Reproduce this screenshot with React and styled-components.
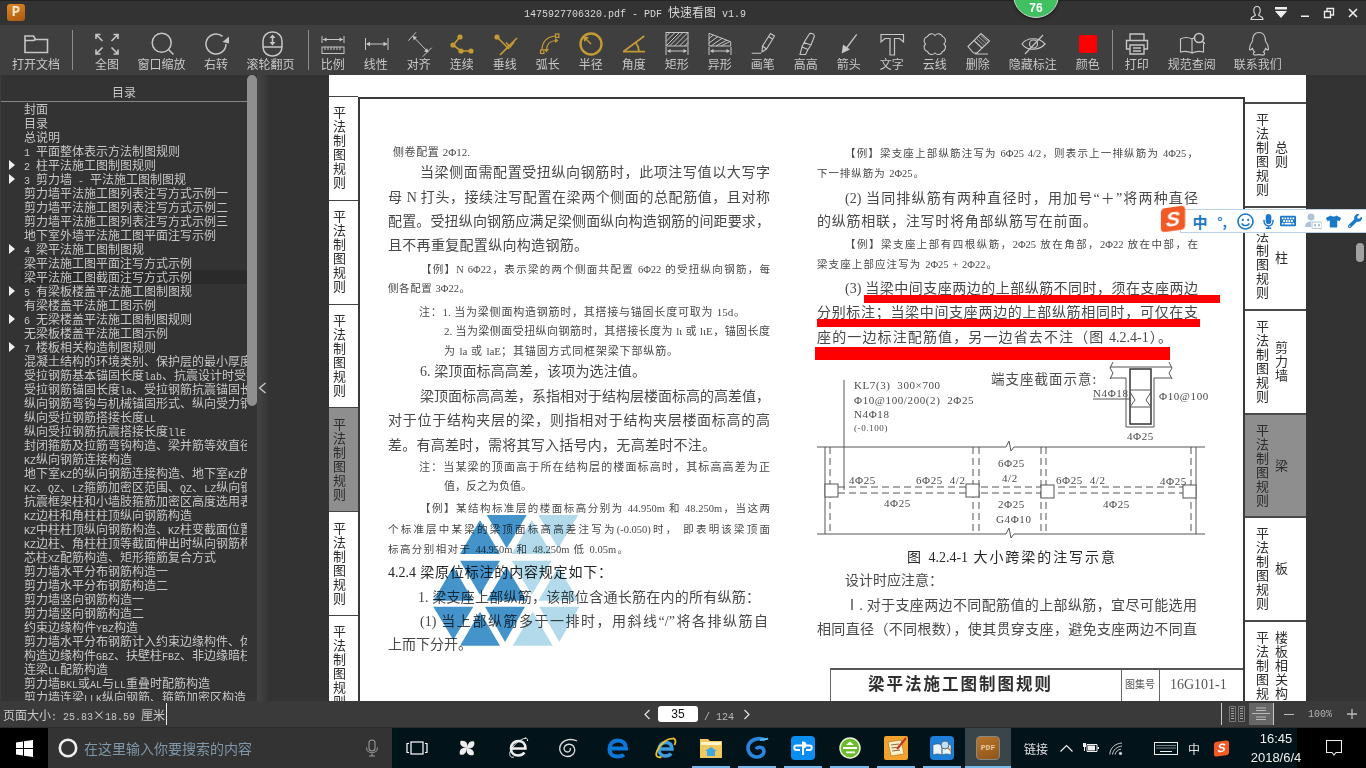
import React from "react";
import styled, { createGlobalStyle } from "styled-components";
import { FaWrench, FaTshirt, FaMicrophone, FaKeyboard, FaRegSmile } from "react-icons/fa";

const CJK = `"Noto Sans CJK SC", sans-serif`;
const GOLD = "#c49a35";
const GREY = "#c6c6c6";

const GlobalStyle = createGlobalStyle`
  html, body {
    margin: 0;
    height: 100%;
    overflow: hidden;
    background: #333;
  }
  body {
    font-family: ${CJK};
  }
  * {
    box-sizing: border-box;
  }
`;

const Screen = styled.div`
  width: 1366px;
  height: 768px;
  display: flex;
  flex-direction: column;
  position: relative;
  overflow: hidden;
`;

/* title bar */
const TitleBar = styled.div`
  height: 25px;
  flex: none;
  background: #333;
  border-top: 1px solid #222;
  display: flex;
  align-items: center;
`;

const Logo = styled.div`
  width: 18px;
  height: 17px;
  margin-left: 7px;
  margin-top: -1px;
  border-radius: 3px;
  background: linear-gradient(160deg, #e08a24, #a9570f);
  color: #f4e6d2;
  font: bold 14px/17px "Liberation Mono", monospace;
  text-align: center;
`;

const Title = styled.div`
  margin-left: 499px;
  color: #d8d8d8;
  font-size: 12px;
  line-height: 16px;
  white-space: nowrap;
`;

const Latin = styled.span`
  font-family: "Liberation Mono", monospace;
  font-size: 10px;
`;

const WinControls = styled.div`
  margin-left: auto;
  margin-right: 1px;
  display: flex;
`;

const WinButton = styled.div`
  width: 24px;
  height: 24px;
  display: flex;
  align-items: center;
  justify-content: center;
`;

const ScoreBadge = styled.div`
  position: absolute;
  left: 1013px;
  top: -28px;
  width: 46px;
  height: 46px;
  border-radius: 50%;
  background: #41c062;
  border: 1px solid #cfd8d0;
  box-shadow: 0 1px 3px rgba(0, 0, 0, 0.6);
  color: #fff;
  font: bold 12px/14px "Liberation Sans", sans-serif;
  text-align: center;
  padding-top: 28px;
`;

/* toolbar */
const Toolbar = styled.div`
  height: 50px;
  flex: none;
  background: #3f3f3f;
  padding-top: 5px;
  display: flex;
`;

const ToolGroup = styled.div`
  display: flex;
  padding-left: ${(p) => p.$pl || 0}px;
  padding-right: ${(p) => p.$pr || 0}px;
`;

const ToolSep = styled.div`
  width: 1px;
  height: 40px;
  background: #8c8c8c;
`;

const Tool = styled.div`
  width: ${(p) => p.$w}px;
  display: flex;
  flex-direction: column;
  align-items: center;
`;

const ToolLabel = styled.div`
  font-size: 12px;
  line-height: 12px;
  color: #c8c8c8;
  white-space: nowrap;
`;

const ToolSvg = styled.svg`
  width: 32px;
  height: 28px;
  flex: none;
  fill: none;
  stroke: ${(p) => (p.$gold ? GOLD : GREY)};
  stroke-width: ${(p) => p.$sw || 1.3}px;
  .solid {
    fill: ${(p) => (p.$gold ? GOLD : GREY)};
    stroke: none;
  }
`;

const ColorSwatch = styled.div`
  width: 18px;
  height: 18px;
  margin: 5px 0;
  border-radius: 2px;
  background: #ff0000;
`;

const I = ({ gold, sw, children }) => (
  <ToolSvg viewBox="0 0 32 28" $gold={gold} $sw={sw}>
    {children}
  </ToolSvg>
);

const Dim = ({ y = 21 }) => (
  <>
    <path d={`M5 ${y - 4}v8M27 ${y - 4}v8M7 ${y}h18`} />
    <path className="solid" d={`M6 ${y}l3.5-2v4zM26 ${y}l-3.5-2v4z`} />
  </>
);

const icons = {
  open: (
    <I sw={1.6}>
      <path d="M5 22.5V6h8.5l2 3.5h12v13z" />
      <path d="M5 10.5h8.5l2-1" />
    </I>
  ),
  full: (
    <I sw={1.6}>
      <path d="M5 9V4.5h4.5M5.5 5l6 6M22.5 4.5H27V9M26.5 5l-6 6M5 19.5V24h4.5M5.5 23.5l6-6M27 19.5V24h-4.5M26.5 23.5l-6-6" />
    </I>
  ),
  zoom: (
    <I sw={1.5}>
      <circle cx="15.7" cy="12.7" r="9.5" />
      <path d="M22.5 19.5l5 5" />
    </I>
  ),
  rotate: (
    <I sw={1.5}>
      <path d="M26 14A10 10 0 1 1 22.5 6.4" />
      <path className="solid" d="M29 6.5v7l-6.5-1.5z" />
    </I>
  ),
  wheel: (
    <I sw={1.5}>
      <rect x="8" y="2" width="19" height="24" rx="9" />
      <path d="M8 17h19" />
      <path d="M17.5 7v6" />
      <path className="solid" d="M17.5 4.5l3 3.5h-6zM17.5 15.5l3-3.5h-6z" />
    </I>
  ),
  ratio: (
    <I sw={1}>
      <path d="M5 6v7M27 6v7M6 9.5h20" />
      <path className="solid" d="M6 9.5l3.5-2v4zM26 9.5l-3.5-2v4z" />
      <rect x="5" y="17" width="22" height="6.5" />
      <path d="M8 17v3M11 17v3M14 17v3M17 17v3M20 17v3M23 17v3" />
    </I>
  ),
  linear: (
    <I sw={1}>
      <path d="M5.5 8v12M28 8v12M7 14h20" />
      <path className="solid" d="M6 14l4-2.2v4.4zM27.5 14l-4-2.2v4.4z" />
    </I>
  ),
  align: (
    <I sw={1}>
      <path d="M5.3 10.7L13 2.3M19.7 26.7l9-9M10.3 6.7l14.4 15" />
      <path className="solid" d="M9.5 6l4.5 1-3.2 3.2zM25.5 22.5l-4.5-1 3.2-3.2z" />
    </I>
  ),
  chain: (
    <I gold sw={1.7}>
      <path d="M14 7L7 15l8 6h10" />
      <circle className="solid" cx="14" cy="7" r="2.6" />
      <circle className="solid" cx="7" cy="15" r="2.6" />
      <circle className="solid" cx="15" cy="21" r="2.6" />
      <circle className="solid" cx="25" cy="21" r="2.6" />
    </I>
  ),
  perp: (
    <I gold sw={1.6}>
      <path d="M8 7l12 12M28 8L11 25M17 12.5l4 4.5 4-5" />
      <circle className="solid" cx="8" cy="7" r="2.6" />
    </I>
  ),
  arc: (
    <I gold sw={1.2}>
      <rect x="8.5" y="20" width="3.4" height="3.4" />
      <rect x="23.5" y="4" width="3.4" height="3.4" />
      <path d="M10 20C10 12 15 6.5 23.5 6M14.5 20C14.5 15 17.5 11 24 10.5" />
      <path className="solid" d="M26.5 10.5l-3.5-2.4v4.8zM14.5 22.5l-2.4-3.5h4.8z" />
    </I>
  ),
  radius: (
    <I gold sw={2.4}>
      <circle cx="16" cy="14" r="10.5" />
      <path strokeWidth="1.4" d="M16 14L10 8" />
      <path className="solid" d="M8.5 6.5l5.5.8-4.7 4.7z" />
    </I>
  ),
  angle: (
    <I gold sw={1.7}>
      <path d="M5 21.7h22M5.5 21.5L26.3 6M18 13Q21 17 21 21.7" />
    </I>
  ),
  rect: (
    <I sw={1}>
      <rect x="5" y="2.5" width="22" height="13.5" />
      <path d="M5 6.5L9 2.5M5 11.5L14 2.5M5 16L18.5 2.5M8.5 16L22 2.5M13.5 16L27 2.5M18.5 16L27 7.5M23.5 16L27 12.5" />
      <Dim />
    </I>
  ),
  shape: (
    <I sw={1}>
      <path d="M5 3.3l21.7 8.4V16H5z" />
      <path d="M5 8.5L9.5 5M5 13L14 6.5M7 16L18.5 8M12 16L23 10M17 16L26 11.5" />
      <Dim />
    </I>
  ),
  pen: (
    <I sw={1.1}>
      <path d="M4.7 23.3H14M15 22L15.5 16L23.5 3.5L27.5 6L19.5 19ZM21.5 6.5l4 2.5M15.5 16l4 3" />
    </I>
  ),
  marker: (
    <I sw={1.1}>
      <path d="M19 4.5C20 2.5 24 3.5 24.5 6L21 15L14 12.5ZM14 12.5L12 17L18 19.5L21 15M12 17L10 24.5H15.5L18 19.5" />
    </I>
  ),
  arrow: (
    <I sw={1.3}>
      <path d="M12 20L23.7 4.3" />
      <path className="solid" d="M8.7 23.5L10 14.5L17 19.5Z" />
    </I>
  ),
  text: (
    <I sw={1.2}>
      <path d="M5 4.5H27.5V12L23.5 8.5H18.5V25H14V8.5H9L5 12Z" />
    </I>
  ),
  cloud: (
    <I sw={1.1}>
      <path d="M8.5 6.5A4.4 4.4 0 0 1 16 5.5A4.4 4.4 0 0 1 23.5 6.5A4.4 4.4 0 0 1 25 14A4.4 4.4 0 0 1 23.5 21.5A4.4 4.4 0 0 1 16 23A4.4 4.4 0 0 1 8.5 21.5A4.4 4.4 0 0 1 6.5 14A4.4 4.4 0 0 1 8.5 6.5Z" />
    </I>
  ),
  eraser: (
    <I sw={1.1}>
      <path d="M6 16.5L19 3.5L27.5 11L15 23H11.5ZM12 10.5L20.5 18.5M13 24H26" />
      <path strokeWidth="0.7" d="M15 9l7 6.5M17 7l7 6.5M19 5.5l6.5 6" />
    </I>
  ),
  eye: (
    <I sw={1.2}>
      <path d="M5 14C10 7 22 7 28 14C22 21 10 21 5 14ZM8 24L26 5" />
      <circle cx="16.5" cy="14" r="4" />
    </I>
  ),
  print: (
    <I sw={1.4}>
      <path d="M9 10V4H23V10M9 19H5.5V10.5H26.5V19H23M9 15H23V24H9ZM12 18h8M12 21h8" />
    </I>
  ),
  book: (
    <I sw={1.1}>
      <path d="M16 9C12 7 8 7 4.5 9V22C8 21 12 21 16 23V9ZM16 9C16.8 8.4 17.6 8 18.5 7.7M16 23C20 21 24 21 27.5 22V13.5" />
      <circle cx="23" cy="8" r="4.5" strokeWidth="1.6" />
      <path strokeWidth="1.6" d="M26.2 11.2l2.6 2.6" />
    </I>
  ),
  qq: (
    <I sw={1.1}>
      <path d="M17 2.5C12 2.5 10.5 7 10.5 11C9 13 7.5 16 7.5 19C7.5 20.5 9 20 10.5 18.5C11 20 11.5 21 12.5 22C10.5 23 11 25.5 14 25C16 25 16.5 24.5 17 24.5C17.5 24.5 18 25 20 25C23 25.5 23.5 23 21.5 22C22.5 21 23 20 23.5 18.5C25 20 26.5 20.5 26.5 19C26.5 16 25 13 23.5 11C23.5 7 22 2.5 17 2.5Z" />
    </I>
  ),
};

/* main area */
const Main = styled.div`
  height: 626px;
  flex: none;
  display: flex;
  background: #333;
  overflow: hidden;
`;

const Sidebar = styled.div`
  width: 247px;
  flex: none;
  overflow: hidden;
  border-left: 1px solid #3c3c3c;
`;

const SidebarHead = styled.div`
  height: 27px;
  padding-top: 8px;
  border-bottom: 1px solid #858585;
  color: #c8c8c8;
  font-size: 12px;
  line-height: 18px;
  text-align: center;
`;

const Row = styled.div`
  height: 14px;
  display: flex;
  color: #c8c8c8;
  font-size: 12px;
  line-height: 14px;
`;

const RowArrow = styled.div`
  width: 20px;
  flex: none;
  padding: 2px 0 0 8px;
  &::before {
    content: "";
    display: ${(p) => (p.$on ? "block" : "none")};
    width: 0;
    height: 0;
    border-top: 5px solid transparent;
    border-bottom: 5px solid transparent;
    border-left: 6px solid #f0f0f0;
  }
`;

const RowText = styled.div`
  flex: 1;
  min-width: 0;
  padding-left: 3px;
  white-space: nowrap;
  overflow: hidden;
  background: ${(p) => (p.$sel ? "#2a2a2a" : "transparent")};
`;

const ScrollTrack = styled.div`
  width: 10px;
  flex: none;
`;

const ScrollThumb = styled.div`
  height: 331px;
  border-radius: 5px;
  background: #8f8f8f;
`;

const Handle = styled.div`
  width: 11px;
  flex: none;
  background: linear-gradient(90deg, #444, #363636);
  display: flex;
  align-items: center;
  justify-content: center;
  height: 100%;
`;

const LeftGutter = styled.div`
  width: 61px;
  flex: none;
`;

const RightGutter = styled.div`
  width: 60px;
  flex: none;
  padding: 168px 2px 0 50px;
`;

const PageThumb = styled.div`
  width: 8px;
  height: 19px;
  border-radius: 4px;
  background: #a2a2a2;
`;

/* scanned page */
const Page = styled.div`
  width: 977px;
  flex: none;
  height: 100%;
  background: #fff;
  position: relative;
  display: flex;
  overflow: hidden;
  color: #484848;
  font-family: "Liberation Serif", ${CJK};
`;

const LeftTabs = styled.div`
  width: 29px;
  flex: none;
  padding-top: 21px;
`;

const LeftTab = styled.div`
  height: 103.8px;
  border-top: 1px solid #444;
  background: ${(p) => (p.$on ? "#8e8e8e" : "#fff")};
  padding-left: 3px;
  display: flex;
  align-items: center;
`;

const TabText = styled.div`
  writing-mode: vertical-rl;
  text-orientation: upright;
  font-family: ${CJK};
  font-size: 13px;
  line-height: 14px;
  letter-spacing: 1px;
  color: #2c2c2c;
  filter: blur(0.3px);
`;

const RightTabs = styled.div`
  width: 61px;
  flex: none;
  padding-top: 27px;
`;

const RightTab = styled.div`
  height: 103.6px;
  border-top: 2px solid #4a4a4a;
  background: ${(p) => (p.$on ? "#8e8e8e" : "#fff")};
  padding-left: 10px;
  display: flex;
  align-items: center;
  gap: 5px;
`;

const Frame = styled.div`
  width: 887px;
  flex: none;
  margin-top: 22px;
  border-top: 2px solid #3a3a3a;
  border-left: 2px solid #3a3a3a;
  border-right: 2px solid #3a3a3a;
  display: flex;
  flex-direction: column;
`;

const FrameBody = styled.div`
  height: 569px;
  flex: none;
  display: flex;
  filter: blur(0.3px);
`;

const Column = styled.div`
  width: ${(p) => p.$w}px;
  flex: none;
  margin-left: ${(p) => p.$ml}px;
  padding-top: ${(p) => p.$pt}px;
`;

const Line = styled.div`
  margin-left: ${(p) => p.$x}px;
  width: ${(p) => p.$w}px;
  height: ${(p) => p.$h}px;
  font-size: ${(p) => p.$s}px;
  line-height: 20px;
  color: ${(p) => (p.$dark ? "#262626" : "inherit")};
  white-space: nowrap;
  text-align: justify;
  text-align-last: justify;
`;

const TitleBlock = styled.div`
  margin-left: 470px;
  height: 40px;
  flex: none;
  border-top: 2px solid #555;
  border-left: 1px solid #666;
  display: flex;
  filter: blur(0.3px);
`;

const BlockCell = styled.div`
  width: ${(p) => p.$w}px;
  flex: none;
  padding-left: ${(p) => p.$pl}px;
  border-left: ${(p) => (p.$line ? "1px solid #666" : "none")};
  height: 32px;
  font-size: ${(p) => p.$s}px;
  font-weight: ${(p) => (p.$b ? 700 : 400)};
  letter-spacing: ${(p) => p.$ls || 0}px;
  line-height: 30px;
  color: ${(p) => (p.$b ? "#2e2e2e" : "#555")};
  white-space: nowrap;
`;

const RedMark = styled.div`
  position: absolute;
  left: ${(p) => p.$x - 329}px;
  top: ${(p) => p.$y - 75}px;
  width: ${(p) => p.$w}px;
  height: ${(p) => p.$h}px;
  background: #ff0000;
`;

const Watermark = styled.svg`
  position: absolute;
  left: 101px;
  top: 435px;
  width: 170px;
  height: 145px;
  mix-blend-mode: multiply;
`;

const Diagram = styled.svg`
  display: block;
  width: 395px;
  height: 190px;
  margin-left: -2px;
  fill: none;
  stroke: #555;
  stroke-width: 1;
  text {
    fill: #4a4a4a;
    stroke: none;
    font-family: "Liberation Serif", ${CJK};
    font-size: 11px;
    letter-spacing: 0.6px;
    white-space: pre;
  }
  .big {
    font-size: 13.5px;
    letter-spacing: 1px;
    font-family: ${CJK};
  }
  .tiny {
    font-size: 9px;
  }
  .dash {
    stroke-dasharray: 7 4;
  }
  .box {
    fill: #fff;
  }
`;

/* sogou bar */
const ImeBar = styled.div`
  position: absolute;
  left: 1180px;
  top: 209px;
  width: 186px;
  height: 24px;
  padding-left: 7px;
  background: #fff;
  border: 1px solid #bcd2e6;
  border-right: none;
  display: flex;
  align-items: center;
  color: #1b78c9;
  font-size: 14px;
`;

const SogouLogo = styled.div`
  position: absolute;
  left: 1161px;
  top: 207px;
  width: 24px;
  height: 24px;
  background: #f15a24;
  border-radius: 4px;
  transform: skewX(-8deg) rotate(-8deg);
  color: #fff;
  font: italic bold 21px/24px "Liberation Sans", sans-serif;
  text-align: center;
`;

const ImeSlot = styled.div`
  width: ${(p) => p.$w}px;
  flex: none;
  display: flex;
  justify-content: center;
  align-items: center;
  font-weight: 700;
  font-size: ${(p) => p.$s || 14}px;
  color: ${(p) => p.$c || "#1b78c9"};
  svg {
    flex: none;
  }
`;

/* status bar */
const StatusBar = styled.div`
  height: 27px;
  flex: none;
  background: #3a3a3a;
  border-bottom: 1px solid #2b2b2b;
  display: flex;
  align-items: center;
  color: #c8c8c8;
  font-size: 12px;
`;

const PageSize = styled.div`
  width: 166px;
  flex: none;
  padding-left: 3px;
  white-space: nowrap;
`;

const Caret = styled.div`
  width: 1px;
  height: 22px;
  flex: none;
  background: #eee;
`;

const Pager = styled.div`
  margin-left: 476px;
  display: flex;
  align-items: center;
`;

const PageInput = styled.div`
  width: 40px;
  height: 16px;
  margin: 0 6px;
  background: #fff;
  border-radius: 3px;
  color: #111;
  font: 12px/16px "Liberation Sans", sans-serif;
  text-align: center;
`;

const PageTotal = styled.div`
  width: 38px;
  color: #b8b8b8;
`;

const ViewTools = styled.div`
  margin-left: auto;
  display: flex;
  align-items: center;
  height: 100%;
`;

const StatusSep = styled.div`
  width: 1px;
  height: 22px;
  background: #c8c8c8;
`;

const ViewButton = styled.div`
  width: ${(p) => p.$w}px;
  height: 22px;
  margin-left: ${(p) => p.$ml || 0}px;
  background: ${(p) => (p.$on ? "#666" : "transparent")};
  display: flex;
  align-items: center;
  justify-content: center;
`;

const ZoomValue = styled.div`
  width: 42px;
  text-align: center;
  color: #b4b4b4;
  font: 10px "Liberation Mono", monospace;
`;

/* taskbar */
const Taskbar = styled.div`
  flex: 1;
  background: #03131a;
  display: flex;
  color: #e8e8e8;
  position: relative;
`;

const StartButton = styled.div`
  width: 48px;
  flex: none;
  background: #000;
  display: flex;
  align-items: center;
  justify-content: center;
`;

const SearchBox = styled.div`
  width: 344px;
  flex: none;
  background: #333;
  display: flex;
  align-items: center;
  padding-left: 10px;
  color: #7f97a8;
  font-size: 14px;
`;

const SearchText = styled.div`
  margin-left: 6px;
  width: 281px;
  font-size: 14px;
  white-space: nowrap;
`;

const Slot = styled.div`
  width: ${(p) => p.$w}px;
  flex: none;
  margin-left: ${(p) => p.$ml || 0}px;
  display: flex;
  align-items: center;
  justify-content: center;
  position: relative;
  background: ${(p) => (p.$active ? "#3a4549" : "transparent")};
  &::after {
    content: "";
    display: ${(p) => (p.$run ? "block" : "none")};
    position: absolute;
    left: ${(p) => (p.$active ? 0 : 4)}px;
    right: ${(p) => (p.$active ? 0 : 4)}px;
    bottom: 0;
    height: 2px;
    background: #76b9ed;
  }
`;

const Tray = styled.div`
  display: flex;
  align-items: center;
  padding-left: ${(p) => p.$pl}px;
  width: ${(p) => p.$w}px;
  flex: none;
`;

const TrayLabel = styled.div`
  font-size: 12px;
  color: #e0e0e0;
`;

const Clock = styled.div`
  width: 52px;
  flex: none;
  margin-left: 17px;
  position: relative;
  z-index: 1;
  font: 13px/19px "Liberation Sans", sans-serif;
  color: #eee;
  text-align: center;
  white-space: nowrap;
  padding-top: 1px;
`;

const NotifyArea = styled.div`
  flex: 1;
  margin-left: -5px;
  padding-left: 4px;
  background: #000;
  display: flex;
  align-items: center;
  justify-content: center;
`;

const PdfTile = styled.div`
  width: 24px;
  height: 24px;
  border-radius: 4px;
  background: linear-gradient(160deg, #b8752c, #8e5518);
  border: 1px solid #888;
  color: #e6c79e;
  font: bold 8px/22px "Liberation Mono", monospace;
  text-align: center;
`;

const MiniSogou = styled.div`
  width: 15px;
  height: 15px;
  background: #f15a24;
  border-radius: 3px;
  transform: skewX(-8deg) rotate(-8deg);
  color: #fff;
  font: italic bold 12px/15px "Liberation Sans", sans-serif;
  text-align: center;
`;

const mixed = (text) =>
  text.split(/([\x20-\x7e]+)/).map((part, i) => (i % 2 ? <Latin key={i}>{part}</Latin> : part));

const tocRows = [
  ["封面"],
  ["目录"],
  ["总说明"],
  ["1 平面整体表示方法制图规则"],
  ["2 柱平法施工图制图规则", 1],
  ["3 剪力墙 - 平法施工图制图规", 1],
  ["剪力墙平法施工图列表注写方式示例一"],
  ["剪力墙平法施工图列表注写方式示例二"],
  ["剪力墙平法施工图列表注写方式示例三"],
  ["地下室外墙平法施工图平面注写示例"],
  ["4 梁平法施工图制图规", 1],
  ["梁平法施工图平面注写方式示例"],
  ["梁平法施工图截面注写方式示例", 0, 1],
  ["5 有梁板楼盖平法施工图制图规", 1],
  ["有梁楼盖平法施工图示例"],
  ["6 无梁楼盖平法施工图制图规则", 1],
  ["无梁板楼盖平法施工图示例"],
  ["7 楼板相关构造制图规则", 1],
  ["混凝土结构的环境类别、保护层的最小厚度"],
  ["受拉钢筋基本锚固长度lab、抗震设计时受拉钢筋"],
  ["受拉钢筋锚固长度la、受拉钢筋抗震锚固长度"],
  ["纵向钢筋弯钩与机械锚固形式、纵向受力钢筋"],
  ["纵向受拉钢筋搭接长度LL"],
  ["纵向受拉钢筋抗震搭接长度llE"],
  ["封闭箍筋及拉筋弯钩构造、梁并筋等效直径"],
  ["KZ纵向钢筋连接构造"],
  ["地下室KZ的纵向钢筋连接构造、地下室KZ的"],
  ["KZ、QZ、LZ箍筋加密区范围、QZ、LZ纵向钢筋"],
  ["抗震框架柱和小墙肢箍筋加密区高度选用表"],
  ["KZ边柱和角柱柱顶纵向钢筋构造"],
  ["KZ中柱柱顶纵向钢筋构造、KZ柱变截面位置"],
  ["KZ边柱、角柱柱顶等截面伸出时纵向钢筋构造"],
  ["芯柱XZ配筋构造、矩形箍筋复合方式"],
  ["剪力墙水平分布钢筋构造一"],
  ["剪力墙水平分布钢筋构造二"],
  ["剪力墙竖向钢筋构造一"],
  ["剪力墙竖向钢筋构造二"],
  ["约束边缘构件YBZ构造"],
  ["剪力墙水平分布钢筋计入约束边缘构件、体积"],
  ["构造边缘构件GBZ、扶壁柱FBZ、非边缘暗柱"],
  ["连梁LL配筋构造"],
  ["剪力墙BKL或AL与LL重叠时配筋构造"],
  ["剪力墙连梁LLK纵向钢筋、箍筋加密区构造"],
];

// text, x from, x to, y centre, font size, darker
const leftLines = [
  ["侧卷配置 2Φ12.", 393, 470, 152, 11],
  ["当梁侧面需配置受扭纵向钢筋时，此项注写值以大写字", 420, 770, 173, 14],
  ["母 N 打头，接续注写配置在梁两个侧面的总配筋值，且对称", 388, 770, 198, 14],
  ["配置。受扭纵向钢筋应满足梁侧面纵向构造钢筋的间距要求，", 388, 770, 222, 14],
  ["且不再重复配置纵向构造钢筋。", 388, 588, 246, 14],
  ["【例】N 6Φ22，表示梁的两个侧面共配置 6Φ22 的受扭纵向钢筋，每", 421, 770, 270, 10.5],
  ["侧各配置 3Φ22。", 388, 470, 289, 10.5],
  ["注：1. 当为梁侧面构造钢筋时，其搭接与锚固长度可取为 15d。", 419, 745, 312, 11],
  ["2. 当为梁侧面受扭纵向钢筋时，其搭接长度为 lι 或 lιE，锚固长度", 444, 770, 331, 11],
  ["为 la 或 laE；其锚固方式同框架梁下部纵筋。", 444, 678, 351, 11],
  ["6. 梁顶面标高高差，该项为选注值。", 420, 646, 372, 14],
  ["梁顶面标高高差，系指相对于结构层楼面标高的高差值，", 420, 770, 397, 14],
  ["对于位于结构夹层的梁，则指相对于结构夹层楼面标高的高", 388, 770, 421, 14],
  ["差。有高差时，需将其写入括号内，无高差时不注。", 388, 716, 446, 14],
  ["注：当某梁的顶面高于所在结构层的楼面标高时，其标高高差为正", 419, 770, 467, 11],
  ["值，反之为负值。", 444, 532, 486, 11],
  ["【例】某结构标准层的楼面标高分别为 44.950m 和 48.250m，当这两", 420, 770, 509, 10.5],
  ["个标准层中某梁的梁顶面标高高差注写为(-0.050)时， 即表明该梁顶面", 388, 770, 530, 10.5],
  ["标高分别相对于 44.950m 和 48.250m 低 0.05m。", 388, 628, 550, 10.5],
  ["4.2.4 梁原位标注的内容规定如下：", 388, 612, 573, 14, 1],
  ["1. 梁支座上部纵筋，该部位含通长筋在内的所有纵筋：", 418, 760, 598, 14],
  ["(1) 当上部纵筋多于一排时，用斜线“/”将各排纵筋自", 420, 768, 622, 14],
  ["上而下分开。", 388, 472, 645, 14],
];

const rightTop = [
  ["【例】梁支座上部纵筋注写为 6Φ25 4/2，则表示上一排纵筋为 4Φ25，", 845, 1198, 154, 10.5],
  ["下一排纵筋为 2Φ25。", 817, 924, 174, 10.5],
  ["(2) 当同排纵筋有两种直径时，用加号“＋”将两种直径", 845, 1198, 199, 14],
  ["的纵筋相联，注写时将角部纵筋写在前面。", 817, 1097, 222, 14],
  ["【例】梁支座上部有四根纵筋，2Φ25 放在角部，2Φ22 放在中部，在", 845, 1198, 245, 10.5],
  ["梁支座上部应注写为 2Φ25 + 2Φ22。", 817, 997, 265, 10.5],
  ["(3) 当梁中间支座两边的上部纵筋不同时，须在支座两边", 845, 1198, 289, 14],
  ["分别标注；当梁中间支座两边的上部纵筋相同时，可仅在支", 817, 1198, 313, 14],
  ["座的一边标注配筋值，另一边省去不注（图 4.2.4-1）。", 817, 1172, 338, 14],
];

const rightBottom = [
  ["图 4.2.4-1 大小跨梁的注写示意", 907, 1115, 558, 14, 1],
  ["设计时应注意：", 845, 943, 581, 14],
  ["Ⅰ. 对于支座两边不同配筋值的上部纵筋，宜尽可能选用", 845, 1197, 606, 14],
  ["相同直径（不同根数），使其贯穿支座，避免支座两边不同直", 817, 1197, 630, 14],
];

const TextLines = ({ lines, originX, lastH }) =>
  lines.map(([t, from, to, y, size, dark], i) => (
    <Line
      key={i}
      $x={from - originX}
      $w={to - from}
      $h={i < lines.length - 1 ? lines[i + 1][3] - y : lastH}
      $s={size}
      $dark={dark}
    >
      {t}
    </Line>
  ));

const darkTris = [
  "486.7,515 526.7,515 506.7,548.3",
  "480,520 460,554 500,554",
  "460,560.7 500,560.7 480,595",
  "453.3,566.7 433.3,600.7 473.3,600.7",
  "506.7,566.7 486.7,600.7 526.7,600.7",
  "433.3,606.7 473.3,606.7 453.3,640",
  "480,611.7 460,645.7 500,645.7",
  "485,606.7 525,606.7 505,642",
];

const lightTris = [
  "531.7,520 511.7,554 551.7,554",
  "538.3,515 578.3,515 558.3,548.3",
  "511.7,560.7 551.7,560.7 531.7,595",
  "558.3,566.7 538.3,600.7 578.3,600.7",
  "532.7,611.7 512.7,645.7 552.7,645.7",
  "539.3,606.7 579.3,606.7 559.3,642",
];

const BeamDiagram = () => (
  <Diagram viewBox="815 358 395 190">
    <path d="M844 380V490" />
    <text x="854" y="389">KL7(3)  300×700</text>
    <text x="854" y="404">Φ10@100/200(2)  2Φ25</text>
    <text x="854" y="418">N4Φ18</text>
    <text className="tiny" x="854" y="431">(-0.100)</text>
    <text className="big" x="991" y="384">端支座截面示意:</text>

    <path d="M1110 367h62M1110 378h16M1154 378h18M1113 362l-3 6 3 5-3 6M1169 362l3 6-3 5 3 6" />
    <path d="M1126 378v49h28v-49" />
    <rect x="1130" y="369" width="21" height="55" strokeWidth="1.5" stroke="#333" />
    <path d="M1130 390h21M1130 407h21M1130 392l5 8-5 7M1151 392l-5 8 5 7" />
    <path d="M1093 399h37" />
    <text x="1093" y="397">N4Φ18</text>
    <text x="1159" y="400">Φ10@100</text>
    <text x="1127" y="440">4Φ25</text>

    <path d="M817 447H1006l3-6 2 10 3-4H1205M817 534H1006l3-6 2 10 3-4H1205" />
    <path d="M825 447v87M1196 447v87" />
    <path className="dash" d="M830 447v87M973 447v87M979 447v87M1041 447v87M1046 447v87M1191 447v87" />
    <path className="dash" d="M838 487H1183M838 493H1183" />
    <rect className="box" x="825" y="484" width="13" height="13" />
    <rect className="box" x="966" y="484" width="13" height="13" />
    <rect className="box" x="1041" y="485" width="13" height="13" />
    <rect className="box" x="1183" y="485" width="13" height="13" />

    <text x="849" y="484">4Φ25</text>
    <text x="916" y="484">6Φ25  4/2</text>
    <text x="998" y="467">6Φ25</text>
    <text x="1002" y="482">4/2</text>
    <text x="1056" y="484">6Φ25  4/2</text>
    <text x="1160" y="485">4Φ25</text>
    <text x="884" y="507">4Φ25</text>
    <text x="998" y="508">2Φ25</text>
    <text x="996" y="523">G4Φ10</text>
    <text x="1103" y="508">4Φ25</text>
  </Diagram>
);

const Petal = ({ r }) => (
  <path d="M10 10C6 9.5 2 7.5 3.5 3C8 1.5 11.5 5 10 10Z" fill="#eee" transform={`rotate(${r} 10 10)`} />
);

export default function App() {
  return (
    <Screen>
      <GlobalStyle />
      <TitleBar>
        <Logo>P</Logo>
        <Title>{mixed("1475927706320.pdf - PDF 快速看图 v1.9")}</Title>
        <WinControls>
          <WinButton>
            <svg width="16" height="16" viewBox="0 0 16 16" fill="none" stroke="#ddd" strokeWidth="1.1">
              <path d="M8 1.5C5.6 1.5 4.8 3.5 4.8 5.5c0 1.5.6 3 1.4 3.8v1.2C4.5 11.3 2 12 2 14.5h12c0-2.5-2.5-3.2-4.2-4V9.3c.8-.8 1.4-2.3 1.4-3.8 0-2-.8-4-3.2-4z" />
            </svg>
          </WinButton>
          <WinButton>
            <svg width="14" height="12" viewBox="0 0 14 12" fill="#eee">
              <path d="M1 0h12v2.5H1zM1 4h12L7 11z" />
            </svg>
          </WinButton>
          <WinButton>
            <svg width="10" height="10" viewBox="0 0 10 10" fill="#eee">
              <path d="M1 7.5h8V9H1z" />
            </svg>
          </WinButton>
          <WinButton>
            <svg width="12" height="12" viewBox="0 0 12 12" fill="none" stroke="#eee" strokeWidth="1.3">
              <path d="M1.5 4.5h6v6h-6zM4 4.5V1.5h6.5V8H7.5" />
            </svg>
          </WinButton>
          <WinButton>
            <svg width="12" height="12" viewBox="0 0 12 12" fill="none" stroke="#eee" strokeWidth="1.6">
              <path d="M2 2l8 8M10 2l-8 8" />
            </svg>
          </WinButton>
        </WinControls>
      </TitleBar>
      <ScoreBadge>76</ScoreBadge>

      <Toolbar>
        <Tool $w={72}>
          {icons.open}
          <ToolLabel>打开文档</ToolLabel>
        </Tool>
        <ToolSep />
        <ToolGroup $pl={6.75} $pr={10}>
          {[
            ["全图", icons.full],
            ["窗口缩放", icons.zoom],
            ["右转", icons.rotate],
            ["滚轮翻页", icons.wheel],
          ].map(([label, icon]) => (
            <Tool key={label} $w={54.5}>
              {icon}
              <ToolLabel>{label}</ToolLabel>
            </Tool>
          ))}
        </ToolGroup>
        <ToolSep />
        <ToolGroup $pl={2.5} $pr={2.5}>
          {[
            ["比例", icons.ratio],
            ["线性", icons.linear],
            ["对齐", icons.align],
            ["连续", icons.chain],
            ["垂线", icons.perp],
            ["弧长", icons.arc],
            ["半径", icons.radius],
            ["角度", icons.angle],
            ["矩形", icons.rect],
            ["异形", icons.shape],
            ["画笔", icons.pen],
            ["高高", icons.marker],
            ["箭头", icons.arrow],
            ["文字", icons.text],
            ["云线", icons.cloud],
            ["删除", icons.eraser],
          ].map(([label, icon]) => (
            <Tool key={label} $w={43}>
              {icon}
              <ToolLabel>{label}</ToolLabel>
            </Tool>
          ))}
          <Tool $w={67}>
            {icons.eye}
            <ToolLabel>隐藏标注</ToolLabel>
          </Tool>
          <Tool $w={43}>
            <ColorSwatch />
            <ToolLabel>颜色</ToolLabel>
          </Tool>
        </ToolGroup>
        <ToolSep />
        <Tool $w={48}>
          {icons.print}
          <ToolLabel>打印</ToolLabel>
        </Tool>
        <Tool $w={62}>
          {icons.book}
          <ToolLabel>规范查阅</ToolLabel>
        </Tool>
        <Tool $w={70}>
          {icons.qq}
          <ToolLabel>联系我们</ToolLabel>
        </Tool>
      </Toolbar>

      <Main>
        <Sidebar>
          <SidebarHead>目录</SidebarHead>
          {tocRows.map(([text, arrow, sel]) => (
            <Row key={text}>
              <RowArrow $on={arrow} />
              <RowText $sel={sel}>{mixed(text)}</RowText>
            </Row>
          ))}
        </Sidebar>
        <ScrollTrack>
          <ScrollThumb />
        </ScrollTrack>
        <Handle>
          <svg width="9" height="12" viewBox="0 0 9 12" fill="none" stroke="#ccc" strokeWidth="1.3">
            <path d="M7.5 1L1.5 6l6 5" />
          </svg>
        </Handle>
        <LeftGutter />
        <Page>
          <LeftTabs>
            {[0, 1, 2, 3, 4, 5].map((i) => (
              <LeftTab key={i} $on={i === 3}>
                <TabText>平法制图规则</TabText>
              </LeftTab>
            ))}
          </LeftTabs>
          <Frame>
            <FrameBody>
              <Column $w={382} $ml={28} $pt={43}>
                <TextLines lines={leftLines} originX={388} lastH={24} />
              </Column>
              <Column $w={381} $ml={47} $pt={45}>
                <TextLines lines={rightTop} originX={817} lastH={30} />
                <BeamDiagram />
                <TextLines lines={rightBottom} originX={817} lastH={24} />
              </Column>
            </FrameBody>
            <TitleBlock>
              <BlockCell $w={290} $pl={37} $s={16.5} $b $ls={2}>
                梁平法施工图制图规则
              </BlockCell>
              <BlockCell $w={38} $pl={3} $s={10} $line>
                图集号
              </BlockCell>
              <BlockCell $w={83} $pl={10} $s={14} $line>
                16G101-1
              </BlockCell>
            </TitleBlock>
          </Frame>
          <RightTabs>
            {[
              ["总则"],
              ["柱"],
              ["剪力墙"],
              ["梁", 1],
              ["板"],
              ["楼板相关构造"],
            ].map(([name, on]) => (
              <RightTab key={name} $on={on}>
                <TabText>平法制图规则</TabText>
                <TabText>{name}</TabText>
              </RightTab>
            ))}
          </RightTabs>
          <RedMark $x={864} $y={295} $w={356} $h={8} />
          <RedMark $x={817} $y={319} $w={383} $h={8} />
          <RedMark $x={815} $y={347} $w={355} $h={13} />
          <Watermark viewBox="430 510 170 145">
            {darkTris.map((pts) => (
              <polygon key={pts} points={pts} fill="#4494cb" />
            ))}
            {lightTris.map((pts) => (
              <polygon key={pts} points={pts} fill="#b2daeb" />
            ))}
          </Watermark>
        </Page>
        <RightGutter>
          <PageThumb />
        </RightGutter>
      </Main>

      <ImeBar>
        <ImeSlot $w={24} $s={15}>中</ImeSlot>
        <ImeSlot $w={20} $s={13}>°,</ImeSlot>
        <ImeSlot $w={26}>
          <FaRegSmile size={17} />
        </ImeSlot>
        <ImeSlot $w={20}>
          <FaMicrophone size={15} />
        </ImeSlot>
        <ImeSlot $w={20}>
          <FaKeyboard size={16} />
        </ImeSlot>
        <ImeSlot $w={30} $c="#b0c4d6">
          <svg width="18" height="16" viewBox="0 0 18 16" fill="#b0c4d6">
            <circle cx="7" cy="4" r="3.5" />
            <path d="M1 14c0-3.5 2-5.500 6-5.500 1 0 2 .2 3 .5H7v5z" />
            <rect x="8" y="9" width="10" height="6.5" rx="1" fill="none" stroke="#b0c4d6" />
            <path d="M10 11h2v2.5h-2zM14 11h2v2.5h-2z" />
          </svg>
        </ImeSlot>
        <ImeSlot $w={10}>
          <FaTshirt size={15} />
        </ImeSlot>
        <ImeSlot $w={34}>
          <FaWrench size={14} />
        </ImeSlot>
      </ImeBar>
      <SogouLogo>S</SogouLogo>

      <StatusBar>
        <PageSize>{mixed("页面大小: 25.83×18.59 厘米")}</PageSize>
        <Caret />
        <Pager>
          <svg width="9" height="11" viewBox="0 0 9 11" fill="none" stroke="#ddd" strokeWidth="1.3">
            <path d="M6.5 1L2 5.5 6.5 10" />
          </svg>
          <PageInput>35</PageInput>
          <PageTotal>
            <Latin>/ 124</Latin>
          </PageTotal>
          <svg width="9" height="11" viewBox="0 0 9 11" fill="none" stroke="#ddd" strokeWidth="1.3">
            <path d="M2.5 1L7 5.5 2.5 10" />
          </svg>
        </Pager>
        <ViewTools>
          <StatusSep />
          <ViewButton $w={16} $ml={7}>
            <svg width="16" height="16" viewBox="0 0 16 16" fill="none" stroke="#777">
              <path d="M.5.5h6v15h-6zM9.5.5h6v15h-6z" />
              <path stroke="#aaa" strokeDasharray="1 1.5" strokeWidth="3" d="M3.5 2v12M12.5 2v12" />
            </svg>
          </ViewButton>
          <ViewButton $w={24} $ml={4} $on>
            <svg width="18" height="18" viewBox="0 0 18 18" fill="none" stroke="#bbb">
              <path d="M0 8.5h18M4 3h10M4 5.5h10M4 12h10M4 14.5h10" />
            </svg>
          </ViewButton>
          <StatusSep />
          <ViewButton $w={21} $ml={4}>
            <svg width="10" height="10" viewBox="0 0 10 10" stroke="#bbb">
              <path d="M0 5.5h10" />
            </svg>
          </ViewButton>
          <ZoomValue>100%</ZoomValue>
          <ViewButton $w={22}>
            <svg width="10" height="10" viewBox="0 0 10 10" stroke="#bbb" strokeWidth="1.3">
              <path d="M0 5h10M5 0v10" />
            </svg>
          </ViewButton>
          <ViewButton $w={3} />
        </ViewTools>
      </StatusBar>

      <Taskbar>
        <StartButton>
          <svg width="17" height="17" viewBox="0 0 17 17" fill="#fff">
            <path d="M0 2.5l7-1V8H0zM8 1.3L17 0v8H8zM0 9h7v6.5l-7-1zM8 9h9v8l-9-1.3z" />
          </svg>
        </StartButton>
        <SearchBox>
          <svg width="20" height="20" viewBox="0 0 20 20" fill="none" stroke="#eee" strokeWidth="2.6">
            <circle cx="10" cy="10" r="8.2" />
          </svg>
          <SearchText>在这里输入你要搜索的内容</SearchText>
          <svg width="14" height="18" viewBox="0 0 14 18" fill="none" stroke="#999" strokeWidth="1.1">
            <rect x="4" y="1" width="6" height="11" rx="3" />
            <path d="M1.5 8.5c0 7 11 7 11 0M7 14.5V17M4 17h6" />
          </svg>
        </SearchBox>
        <Slot $w={49}>
          <svg width="22" height="14" viewBox="0 0 22 14" fill="none" stroke="#fff" strokeWidth="1.2">
            <rect x="5" y="1" width="12" height="12" />
            <path d="M3 2.5H1v9h2M19 2.5h2v9h-2" />
          </svg>
        </Slot>
        <Slot $w={51}>
          <svg width="20" height="20" viewBox="0 0 20 20">
            <Petal r={0} />
            <Petal r={90} />
            <Petal r={180} />
            <Petal r={270} />
          </svg>
        </Slot>
        <Slot $w={51}>
          <svg width="22" height="24" viewBox="0 0 22 24" fill="none" stroke="#eee" strokeWidth="2.6">
            <path d="M4.5 12.5h14c0-5-3-7.500-7-7.500s-7.500 3-7.500 7.500c0 5 3.500 7 7 7 3 0 5-1 6.500-3" />
            <path strokeWidth="1" d="M19 2c-6 1-13 7-16 14-1 4 1 6 4 5M18 2c2 0 3 1 2.500 3" />
          </svg>
        </Slot>
        <Slot $w={50}>
          <svg width="20" height="20" viewBox="0 0 20 20" fill="none" stroke="#ddd" strokeWidth="1.3">
            <path d="M19 3C14 .5 7 1 3.500 5.500-.5 11 3 18.500 9.500 18.500c5 0 8-4 7-8-1-4.500-7-5.500-9.500-2.500-2 2.500-.5 6 2.500 6 2 0 3.500-2 2.500-4" />
          </svg>
        </Slot>
        <Slot $w={49}>
          <svg width="22" height="22" viewBox="0 0 22 22" fill="none" stroke="#0a78d7" strokeWidth="4">
            <path d="M3.500 11.500H19c0-5-3-8-8-8-5.500 0-8.500 4-8.500 8.500 0 5.500 4 7.500 8 7.500 2.500 0 5-.6 6.500-1.800" />
          </svg>
        </Slot>
        <Slot $w={46}>
          <svg width="24" height="24" viewBox="0 0 24 24" fill="none">
            <path stroke="#3f9ce0" strokeWidth="3.5" d="M6 13h13c0-4.500-2.500-6.500-6.500-6.500S6 10 6 13.500c0 4 3 6.500 6.500 6.500 2.500 0 4.500-1 5.500-2.500" />
            <path stroke="#e8c22e" strokeWidth="1.8" d="M22 3c-7-2-14 4-18 12-2 5 0 7 4.500 6M20 2c3 1 3 4 1.500 7" />
          </svg>
        </Slot>
        <Slot $w={46} $run>
          <svg width="22" height="20" viewBox="0 0 22 20">
            <path fill="#f0c860" d="M0 1h8l2 2h12v17H0z" />
            <path fill="#fff3c8" d="M1 4h20v3H1z" />
            <path fill="#3fa7de" d="M11 9l6 4h-2v5H7v-5H5z" />
          </svg>
        </Slot>
        <Slot $w={46} $run>
          <svg width="24" height="24" viewBox="0 0 24 24" fill="none" stroke="#2a86dc" strokeWidth="3.6">
            <path d="M20 4C15 1.500 7 2.500 4 8c-3 6 1.500 13 8 13 5 0 8-4 6.500-7.500-1.500-3-6-3-7.500-.5" />
            <path strokeWidth="2" stroke="#58b7f0" d="M15 4c4-1 6-.5 8-1.500" />
          </svg>
        </Slot>
        <Slot $w={46} $run>
          <svg width="24" height="24" viewBox="0 0 24 24">
            <rect width="24" height="24" rx="4" fill="#0c8ef0" />
            <path fill="none" stroke="#fff" strokeWidth="2" d="M12 11V6.500a2.500 2.500 0 0 1 0 5zM9 14H5.500a2.200 2.200 0 0 1 0-4.400H18.500a2.200 2.200 0 0 1 0 4.400H15M12 11v8" />
          </svg>
        </Slot>
        <Slot $w={47} $run>
          <svg width="22" height="22" viewBox="0 0 22 22">
            <circle cx="11" cy="11" r="10" fill="#6dbb2e" stroke="#e8f4d8" strokeWidth="1.5" />
            <path fill="#fff" d="M4 10h14v2H4zM7 14.500h9v1.800H7zM11 4.500l4 3.500H7z" />
          </svg>
        </Slot>
        <Slot $w={46} $run>
          <svg width="24" height="24" viewBox="0 0 24 24">
            <rect width="24" height="24" rx="2" fill="#f2a22f" />
            <path fill="#fbeecb" stroke="#a86a18" strokeWidth=".6" d="M4 6l13-2 3 14-13 2z" />
            <path stroke="#8a6a3a" d="M7 9l8-1M7.5 12l8-1M8 15l8-1" />
            <path stroke="#c2362a" strokeWidth="2" d="M22 2L13 13" />
          </svg>
        </Slot>
        <Slot $w={46} $run>
          <svg width="24" height="24" viewBox="0 0 24 24">
            <rect width="24" height="24" rx="4" fill="#1d7fd8" />
            <path fill="#eaf4fc" stroke="#356" strokeWidth=".6" d="M3 9c3-1.500 6-1.500 9 0v10c-3-1.500-6-1.500-9 0zM12 9c3-1.500 6-1.500 9 0v10c-3-1.500-6-1.500-9 0z" />
            <circle cx="15" cy="9" r="4" fill="#bfe0f7" stroke="#567" />
            <path stroke="#d08a2e" strokeWidth="1.6" d="M18 12l3 3" />
          </svg>
        </Slot>
        <Slot $w={46} $run $active>
          <PdfTile>PDF</PdfTile>
        </Slot>
        <Tray $pl={13} $w={43}>
          <TrayLabel>链接</TrayLabel>
        </Tray>
        <Slot $w={24}>
          <svg width="13" height="8" viewBox="0 0 13 8" fill="none" stroke="#eee" strokeWidth="1.2">
            <path d="M.5 7.5l6-6 6 6" />
          </svg>
        </Slot>
        <Slot $w={24}>
          <svg width="17" height="12" viewBox="0 0 17 12">
            <path fill="none" stroke="#eee" d="M5 2.5h10v7H5z" />
            <path fill="#eee" d="M6 3.5h7v5H6zM15.5 5H17v2h-1.5zM1 1h3v4H1zM2 5h1v4H2z" />
          </svg>
        </Slot>
        <Slot $w={27}>
          <svg width="14" height="13" viewBox="0 0 14 13" fill="none" stroke="#ccc">
            <path d="M.8 12.5C1 6 6 1.500 13 1M3.500 12.500C4 8 8 4.500 13 4M6 12.500C6.500 10 9 7.500 12 7" />
            <circle cx="11.5" cy="11.5" r="1.2" fill="#ddd" />
          </svg>
        </Slot>
        <Slot $w={37} $ml={18}>
          <svg width="24" height="13" viewBox="0 0 24 13" fill="none" stroke="#eee">
            <rect x=".5" y=".5" width="23" height="12" />
            <path strokeDasharray="1 1" d="M2.5 3.5h19M2.5 6h19" />
            <path d="M6 9.5h12" />
          </svg>
        </Slot>
        <Tray $pl={4} $w={26}>
          <TrayLabel>中</TrayLabel>
        </Tray>
        <Slot $w={23}>
          <MiniSogou>S</MiniSogou>
        </Slot>
        <Clock>
          16:45
          <br />
          2018/6/4
        </Clock>
        <NotifyArea>
          <svg width="16" height="16" viewBox="0 0 16 16" fill="none" stroke="#eee" strokeWidth="1.1">
            <path d="M.5.5h15v12H10L8 15l-2-2.5H.5z" />
          </svg>
        </NotifyArea>
      </Taskbar>
    </Screen>
  );
}
